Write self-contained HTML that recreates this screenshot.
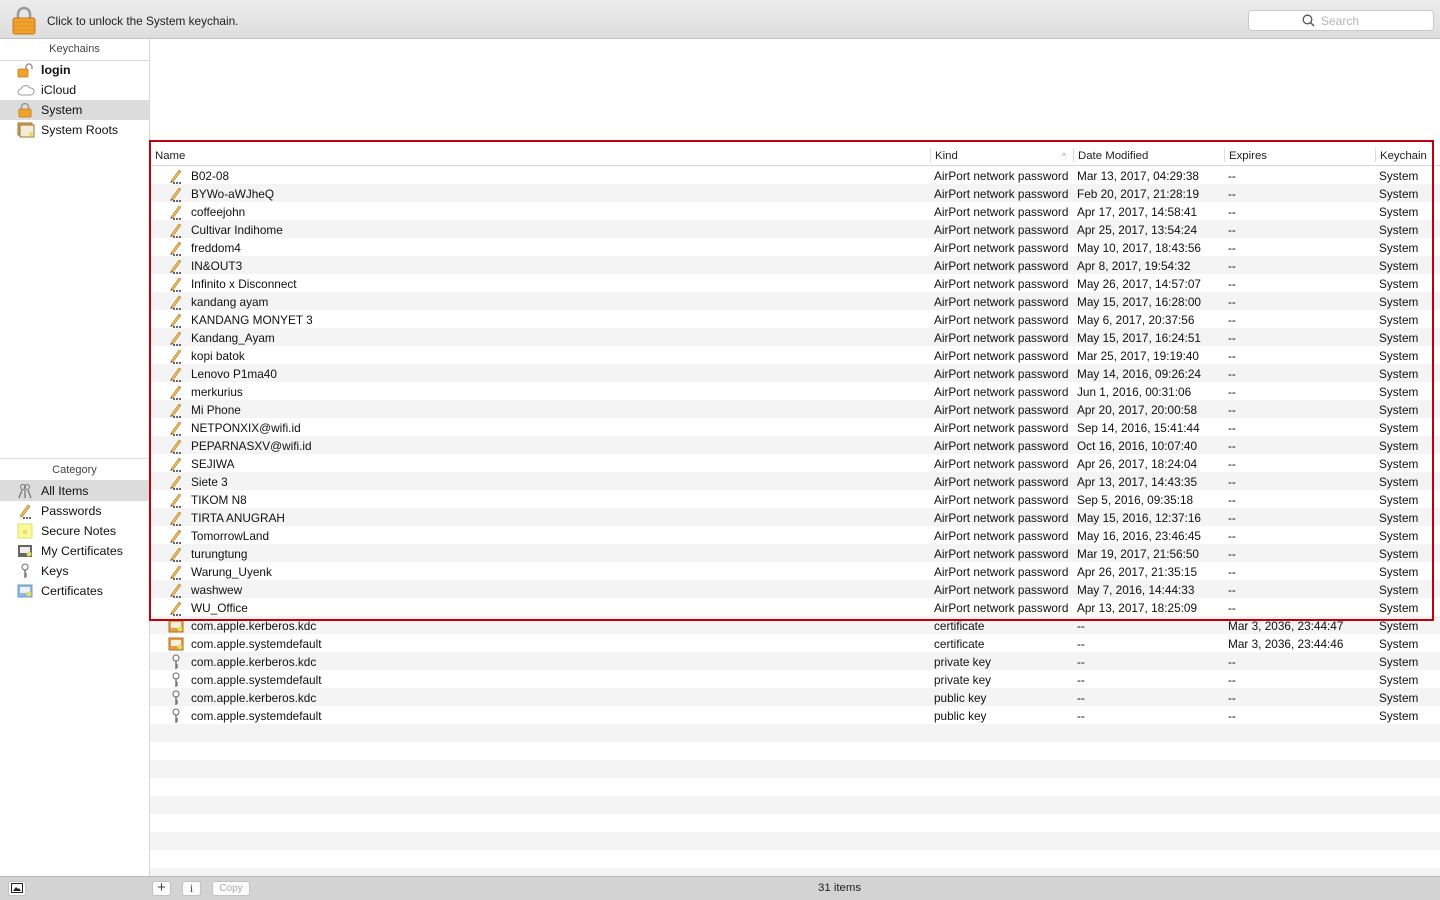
<!DOCTYPE html>
<html><head><meta charset="utf-8"><style>
*{margin:0;padding:0;box-sizing:border-box}
body{width:1440px;height:900px;overflow:hidden;font-family:"Liberation Sans",sans-serif;background:#fff;position:relative;color:#111}
#tb{position:absolute;left:0;top:0;width:1440px;height:39px;background:linear-gradient(#ececec,#dedede);border-bottom:1px solid #c4c4c4}
#tb .msg{position:absolute;left:47px;top:14px;font-size:11.8px;color:#222}
#search{position:absolute;left:1248px;top:10px;width:186px;height:21px;background:#fff;border:1px solid #c9c9c9;border-radius:4px;font-size:12px;color:#b5b5b5}
#side{position:absolute;left:0;top:39px;width:150px;height:837px;background:#fff;border-right:1px solid #d6d6d6}
.sh{position:absolute;left:0;width:149px;text-align:center;font-size:11px;color:#444;height:22px;line-height:21px;border-bottom:1px solid #dcdcdc}
.si{position:absolute;left:0;width:149px;height:20px;font-size:12.4px;line-height:21px;padding-left:41px;color:#111}
.si.sel{background:#dcdcdc}
.si svg{position:absolute;left:17px;top:2px}
#main{position:absolute;left:150px;top:166px;width:1290px;height:710px;background:repeating-linear-gradient(#fff 0,#fff 18px,#f4f4f5 18px,#f4f4f5 36px)}
#hdr{position:absolute;left:150px;top:145px;width:1290px;height:21px;border-bottom:1px solid #d6d6d6;font-size:11.4px;color:#222}
#hdr span{position:absolute;top:4px}
#hdr i{position:absolute;top:3px;width:1px;height:14px;background:#dedede}
.r{position:absolute;left:150px;width:1290px;height:18px;font-size:11.8px;line-height:20px;color:#111}
.r span{position:absolute;top:0;white-space:nowrap}
.r svg{position:absolute;left:18px;top:2px}
#red{position:absolute;left:149px;top:140px;width:1285px;height:481px;border:2.5px solid #c0000c}
#bb{position:absolute;left:0;top:876px;width:1440px;height:24px;background:#d3d3d3;border-top:1px solid #b9b9b9}
.btn{position:absolute;top:4px;height:15px;background:#fbfbfb;border:1px solid #c2c2c2;border-radius:3px;font-size:10px;text-align:center;line-height:13px;color:#444}
</style></head><body>
<div id="tb">
<svg style="position:absolute;left:12px;top:6px" width="24" height="29" viewBox="0 0 24 29"><path d="M6 13V8a6 6 0 0 1 12 0v5" fill="none" stroke="#9a9a9a" stroke-width="2.5"/><rect x="1" y="12" width="22" height="16" rx="2" fill="#f0a22e" stroke="#c57a14"/><g stroke="#e08a18" stroke-width=".7"><line x1="2" y1="16" x2="22" y2="16"/><line x1="2" y1="20" x2="22" y2="20"/><line x1="2" y1="24" x2="22" y2="24"/></g></svg>
<div class="msg">Click to unlock the System keychain.</div>
<div id="search"><svg style="position:absolute;left:53px;top:3px" width="13" height="13" viewBox="0 0 13 13"><circle cx="5.5" cy="5.5" r="4.3" fill="none" stroke="#555" stroke-width="1.3"/><line x1="8.6" y1="8.6" x2="12" y2="12" stroke="#555" stroke-width="1.5"/></svg><span style="position:absolute;left:72px;top:3px">Search</span></div>
</div>

<div id="side">
<div class="sh" style="top:0">Keychains</div>
<div class="si" style="top:21px;font-weight:bold"><svg width="16" height="16"><path d="M9 8V5a3 3 0 0 1 6 0v2" fill="none" stroke="#999" stroke-width="1.5"/><rect x="1" y="7" width="10" height="8" rx="1" fill="#f0a22e" stroke="#c57a14" stroke-width=".8"/></svg>login</div>
<div class="si" style="top:41px"><svg width="18" height="16"><path d="M4 13a3 3 0 0 1 0-6 5 5 0 0 1 9-1 3.5 3.5 0 0 1 1 7z" fill="#fff" stroke="#999"/></svg>iCloud</div>
<div class="si sel" style="top:61px"><svg width="16" height="16"><path d="M4.5 8V5a3.5 3.5 0 0 1 7 0v3" fill="none" stroke="#999" stroke-width="1.5"/><rect x="2" y="7" width="12" height="8" rx="1" fill="#f0a22e" stroke="#c57a14" stroke-width=".8"/></svg>System</div>
<div class="si" style="top:81px"><svg width="18" height="16"><rect x="1" y="1" width="14" height="12" fill="#d9a864" stroke="#a07030"/><rect x="3" y="3" width="14" height="12" fill="#f4ecd8" stroke="#a07030"/><circle cx="14" cy="12" r="2" fill="#dfe060"/></svg>System Roots</div>
<div class="sh" style="top:419px;border-top:1px solid #dcdcdc;height:23px;line-height:22px">Category</div>
<div class="si sel" style="top:442px"><svg width="16" height="16"><circle cx="6" cy="4" r="2.5" fill="none" stroke="#777"/><circle cx="10" cy="4" r="2.5" fill="none" stroke="#777"/><path d="M5 7l-3 8M8 7v8M11 7l3 8" stroke="#777" stroke-width="1.3"/></svg>All Items</div>
<div class="si" style="top:462px"><svg width="16" height="16"><path d="M3 13L11 2l2 1.5L5 14z" fill="#f3c050" stroke="#a07030" stroke-width=".6"/><circle cx="7" cy="15" r=".9"/><circle cx="10" cy="15" r=".9"/><circle cx="13" cy="15" r=".9"/></svg>Passwords</div>
<div class="si" style="top:482px"><svg width="16" height="16"><rect x="1" y="1" width="14" height="14" fill="#fafa9a" stroke="#dede70"/><rect x="6" y="7" width="4" height="4" fill="#e0e070"/></svg>Secure Notes</div>
<div class="si" style="top:502px"><svg width="16" height="16"><rect x="1" y="2" width="14" height="12" fill="#666"/><rect x="3" y="4" width="10" height="6" fill="#eee"/><circle cx="12" cy="11" r="2.5" fill="#dfe060"/></svg>My Certificates</div>
<div class="si" style="top:522px"><svg width="16" height="16"><circle cx="8" cy="4" r="3" fill="#fff" stroke="#666"/><path d="M8 7v8M8 11h2M8 13h2" stroke="#666" stroke-width="1.3"/></svg>Keys</div>
<div class="si" style="top:542px"><svg width="16" height="16"><rect x="1" y="2" width="14" height="12" fill="#8fb8e0" stroke="#6a98c8"/><rect x="3" y="4" width="10" height="6" fill="#eef"/><circle cx="12" cy="11" r="2.5" fill="#dfe060"/></svg>Certificates</div>
</div>

<div id="main"></div>
<div id="hdr"><span style="left:5px;top:5px">Name</span><i style="left:780px"></i><span style="left:785px;top:5px">Kind</span><span style="left:912px;color:#999;font-size:9px;top:6px">^</span><i style="left:923px"></i><span style="left:928px;top:5px">Date Modified</span><i style="left:1074px"></i><span style="left:1079px;top:5px">Expires</span><i style="left:1225px"></i><span style="left:1230px;top:5px">Keychain</span></div>

<svg width="0" height="0" style="position:absolute"><defs>
<g id="pw"><path d="M3 13L11 2l1.8 1.3L5 14z" fill="#f3c050" stroke="#a07030" stroke-width=".6"/><path d="M3 13l-.6 2 2-1" fill="#333"/><circle cx="6" cy="15" r=".9"/><circle cx="9" cy="15" r=".9"/><circle cx="12" cy="15" r=".9"/></g>
<g id="ce"><rect x="1" y="2" width="14" height="12" fill="#e3a040" stroke="#b07020"/><rect x="3" y="4" width="10" height="6" fill="#f5efe0"/><circle cx="12" cy="11" r="2.5" fill="#dfe060"/></g>
<g id="ky"><circle cx="8" cy="4" r="3" fill="#fff" stroke="#666"/><path d="M8 7v8M8 11h2M8 13h2" stroke="#666" stroke-width="1.3"/></g>
</defs></svg>

<div class="r" style="top:166px"><svg width="16" height="16"><use href="#pw"/></svg><span style="left:41px">B02-08</span><span style="left:784px">AirPort network password</span><span style="left:927px">Mar 13, 2017, 04:29:38</span><span style="left:1078px">--</span><span style="left:1229px">System</span></div>
<div class="r" style="top:184px"><svg width="16" height="16"><use href="#pw"/></svg><span style="left:41px">BYWo-aWJheQ</span><span style="left:784px">AirPort network password</span><span style="left:927px">Feb 20, 2017, 21:28:19</span><span style="left:1078px">--</span><span style="left:1229px">System</span></div>
<div class="r" style="top:202px"><svg width="16" height="16"><use href="#pw"/></svg><span style="left:41px">coffeejohn</span><span style="left:784px">AirPort network password</span><span style="left:927px">Apr 17, 2017, 14:58:41</span><span style="left:1078px">--</span><span style="left:1229px">System</span></div>
<div class="r" style="top:220px"><svg width="16" height="16"><use href="#pw"/></svg><span style="left:41px">Cultivar Indihome</span><span style="left:784px">AirPort network password</span><span style="left:927px">Apr 25, 2017, 13:54:24</span><span style="left:1078px">--</span><span style="left:1229px">System</span></div>
<div class="r" style="top:238px"><svg width="16" height="16"><use href="#pw"/></svg><span style="left:41px">freddom4</span><span style="left:784px">AirPort network password</span><span style="left:927px">May 10, 2017, 18:43:56</span><span style="left:1078px">--</span><span style="left:1229px">System</span></div>
<div class="r" style="top:256px"><svg width="16" height="16"><use href="#pw"/></svg><span style="left:41px">IN&amp;OUT3</span><span style="left:784px">AirPort network password</span><span style="left:927px">Apr 8, 2017, 19:54:32</span><span style="left:1078px">--</span><span style="left:1229px">System</span></div>
<div class="r" style="top:274px"><svg width="16" height="16"><use href="#pw"/></svg><span style="left:41px">Infinito x Disconnect</span><span style="left:784px">AirPort network password</span><span style="left:927px">May 26, 2017, 14:57:07</span><span style="left:1078px">--</span><span style="left:1229px">System</span></div>
<div class="r" style="top:292px"><svg width="16" height="16"><use href="#pw"/></svg><span style="left:41px">kandang ayam</span><span style="left:784px">AirPort network password</span><span style="left:927px">May 15, 2017, 16:28:00</span><span style="left:1078px">--</span><span style="left:1229px">System</span></div>
<div class="r" style="top:310px"><svg width="16" height="16"><use href="#pw"/></svg><span style="left:41px">KANDANG MONYET 3</span><span style="left:784px">AirPort network password</span><span style="left:927px">May 6, 2017, 20:37:56</span><span style="left:1078px">--</span><span style="left:1229px">System</span></div>
<div class="r" style="top:328px"><svg width="16" height="16"><use href="#pw"/></svg><span style="left:41px">Kandang_Ayam</span><span style="left:784px">AirPort network password</span><span style="left:927px">May 15, 2017, 16:24:51</span><span style="left:1078px">--</span><span style="left:1229px">System</span></div>
<div class="r" style="top:346px"><svg width="16" height="16"><use href="#pw"/></svg><span style="left:41px">kopi batok</span><span style="left:784px">AirPort network password</span><span style="left:927px">Mar 25, 2017, 19:19:40</span><span style="left:1078px">--</span><span style="left:1229px">System</span></div>
<div class="r" style="top:364px"><svg width="16" height="16"><use href="#pw"/></svg><span style="left:41px">Lenovo P1ma40</span><span style="left:784px">AirPort network password</span><span style="left:927px">May 14, 2016, 09:26:24</span><span style="left:1078px">--</span><span style="left:1229px">System</span></div>
<div class="r" style="top:382px"><svg width="16" height="16"><use href="#pw"/></svg><span style="left:41px">merkurius</span><span style="left:784px">AirPort network password</span><span style="left:927px">Jun 1, 2016, 00:31:06</span><span style="left:1078px">--</span><span style="left:1229px">System</span></div>
<div class="r" style="top:400px"><svg width="16" height="16"><use href="#pw"/></svg><span style="left:41px">Mi Phone</span><span style="left:784px">AirPort network password</span><span style="left:927px">Apr 20, 2017, 20:00:58</span><span style="left:1078px">--</span><span style="left:1229px">System</span></div>
<div class="r" style="top:418px"><svg width="16" height="16"><use href="#pw"/></svg><span style="left:41px">NETPONXIX@wifi.id</span><span style="left:784px">AirPort network password</span><span style="left:927px">Sep 14, 2016, 15:41:44</span><span style="left:1078px">--</span><span style="left:1229px">System</span></div>
<div class="r" style="top:436px"><svg width="16" height="16"><use href="#pw"/></svg><span style="left:41px">PEPARNASXV@wifi.id</span><span style="left:784px">AirPort network password</span><span style="left:927px">Oct 16, 2016, 10:07:40</span><span style="left:1078px">--</span><span style="left:1229px">System</span></div>
<div class="r" style="top:454px"><svg width="16" height="16"><use href="#pw"/></svg><span style="left:41px">SEJIWA</span><span style="left:784px">AirPort network password</span><span style="left:927px">Apr 26, 2017, 18:24:04</span><span style="left:1078px">--</span><span style="left:1229px">System</span></div>
<div class="r" style="top:472px"><svg width="16" height="16"><use href="#pw"/></svg><span style="left:41px">Siete 3</span><span style="left:784px">AirPort network password</span><span style="left:927px">Apr 13, 2017, 14:43:35</span><span style="left:1078px">--</span><span style="left:1229px">System</span></div>
<div class="r" style="top:490px"><svg width="16" height="16"><use href="#pw"/></svg><span style="left:41px">TIKOM N8</span><span style="left:784px">AirPort network password</span><span style="left:927px">Sep 5, 2016, 09:35:18</span><span style="left:1078px">--</span><span style="left:1229px">System</span></div>
<div class="r" style="top:508px"><svg width="16" height="16"><use href="#pw"/></svg><span style="left:41px">TIRTA ANUGRAH</span><span style="left:784px">AirPort network password</span><span style="left:927px">May 15, 2016, 12:37:16</span><span style="left:1078px">--</span><span style="left:1229px">System</span></div>
<div class="r" style="top:526px"><svg width="16" height="16"><use href="#pw"/></svg><span style="left:41px">TomorrowLand</span><span style="left:784px">AirPort network password</span><span style="left:927px">May 16, 2016, 23:46:45</span><span style="left:1078px">--</span><span style="left:1229px">System</span></div>
<div class="r" style="top:544px"><svg width="16" height="16"><use href="#pw"/></svg><span style="left:41px">turungtung</span><span style="left:784px">AirPort network password</span><span style="left:927px">Mar 19, 2017, 21:56:50</span><span style="left:1078px">--</span><span style="left:1229px">System</span></div>
<div class="r" style="top:562px"><svg width="16" height="16"><use href="#pw"/></svg><span style="left:41px">Warung_Uyenk</span><span style="left:784px">AirPort network password</span><span style="left:927px">Apr 26, 2017, 21:35:15</span><span style="left:1078px">--</span><span style="left:1229px">System</span></div>
<div class="r" style="top:580px"><svg width="16" height="16"><use href="#pw"/></svg><span style="left:41px">washwew</span><span style="left:784px">AirPort network password</span><span style="left:927px">May 7, 2016, 14:44:33</span><span style="left:1078px">--</span><span style="left:1229px">System</span></div>
<div class="r" style="top:598px"><svg width="16" height="16"><use href="#pw"/></svg><span style="left:41px">WU_Office</span><span style="left:784px">AirPort network password</span><span style="left:927px">Apr 13, 2017, 18:25:09</span><span style="left:1078px">--</span><span style="left:1229px">System</span></div>
<div class="r" style="top:616px"><svg width="16" height="16"><use href="#ce"/></svg><span style="left:41px">com.apple.kerberos.kdc</span><span style="left:784px">certificate</span><span style="left:927px">--</span><span style="left:1078px">Mar 3, 2036, 23:44:47</span><span style="left:1229px">System</span></div>
<div class="r" style="top:634px"><svg width="16" height="16"><use href="#ce"/></svg><span style="left:41px">com.apple.systemdefault</span><span style="left:784px">certificate</span><span style="left:927px">--</span><span style="left:1078px">Mar 3, 2036, 23:44:46</span><span style="left:1229px">System</span></div>
<div class="r" style="top:652px"><svg width="16" height="16"><use href="#ky"/></svg><span style="left:41px">com.apple.kerberos.kdc</span><span style="left:784px">private key</span><span style="left:927px">--</span><span style="left:1078px">--</span><span style="left:1229px">System</span></div>
<div class="r" style="top:670px"><svg width="16" height="16"><use href="#ky"/></svg><span style="left:41px">com.apple.systemdefault</span><span style="left:784px">private key</span><span style="left:927px">--</span><span style="left:1078px">--</span><span style="left:1229px">System</span></div>
<div class="r" style="top:688px"><svg width="16" height="16"><use href="#ky"/></svg><span style="left:41px">com.apple.kerberos.kdc</span><span style="left:784px">public key</span><span style="left:927px">--</span><span style="left:1078px">--</span><span style="left:1229px">System</span></div>
<div class="r" style="top:706px"><svg width="16" height="16"><use href="#ky"/></svg><span style="left:41px">com.apple.systemdefault</span><span style="left:784px">public key</span><span style="left:927px">--</span><span style="left:1078px">--</span><span style="left:1229px">System</span></div>

<div id="red"></div>

<div id="bb">
<div class="btn" style="left:8px;width:18px"><svg width="12" height="10" style="margin-top:1px"><rect x=".5" y=".5" width="11" height="9" fill="#fff" stroke="#222"/><path d="M2 8l3-4 2 2 1-1 2 3z" fill="#222"/></svg></div>
<div class="btn" style="left:152px;width:19px;font-size:15px;line-height:12px">+</div>
<div class="btn" style="left:182px;width:19px;font-family:'Liberation Serif',serif;font-size:12px">i</div>
<div class="btn" style="left:212px;width:38px;color:#aaa">Copy</div>
<div style="position:absolute;left:818px;top:5px;font-size:11.4px;color:#222">31 items</div>
</div>
</body></html>
